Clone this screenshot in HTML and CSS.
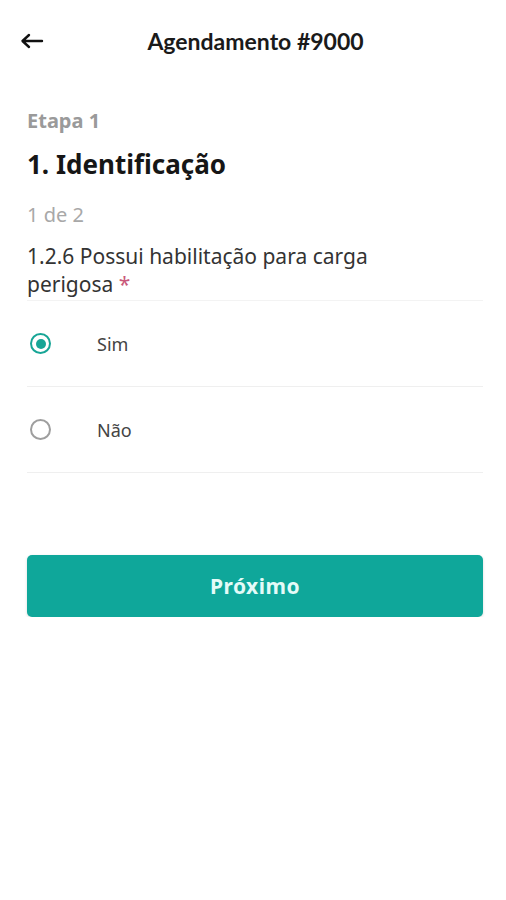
FILE: index.html
```html
<!DOCTYPE html>
<html lang="pt-BR">

<head>
    <meta charset="UTF-8">
    <meta name="viewport" content="width=device-width, initial-scale=1.0">
    <title>Agendamento #9000</title>

    <link rel="stylesheet" href="styles.css">
</head>

<body>
    <header class="topbar">
        <button class="back" aria-label="Voltar">
            <svg width="24" height="16" viewBox="0 0 24 16">
                <path d="M22 8H3M9 2L2.5 8L9 14" fill="none" stroke="#111" stroke-width="2.4" stroke-linecap="round" stroke-linejoin="round" />
            </svg>
        </button>
        <h1 class="title">Agendamento #9000</h1>
    </header>

    <main class="content">
        <p class="step">Etapa 1</p>
        <h2 class="section">1. Identificação</h2>
        <p class="counter">1 de 2</p>
        <p class="question">1.2.6 Possui habilitação para carga<br>perigosa <span class="required">*</span></p>

        <div class="options">
            <label class="option">
                <input type="radio" name="carga" checked>
                <span class="radio"></span>
                <span class="label">Sim</span>
            </label>
            <label class="option">
                <input type="radio" name="carga">
                <span class="radio"></span>
                <span class="label">Não</span>
            </label>
        </div>

        <button class="next">Próximo</button>
    </main>
</body>

</html>
```

FILE: styles.css
```css
* {
    box-sizing: border-box;
}

body {
    margin: 0;
    font-family: "Noto Sans", "Open Sans", sans-serif;
    color: #222;
    background: #fff;
}

.topbar {
    display: flex;
    align-items: center;
    height: 82px;
    padding: 0 20px;
}

.back {
    border: none;
    background: none;
    padding: 0;
    display: flex;
    cursor: pointer;
}

.title {
    flex: 1;
    margin: 0 19px 0 0;
    text-align: center;
    font-family: Lato, "Noto Sans", sans-serif;
    font-size: 23px;
    font-weight: 700;
    color: #1a1a1a;
}

.content {
    padding: 0 23px 0 27px;
}

.step {
    margin: 27px 0 0;
    font-size: 20px;
    line-height: 24px;
    font-weight: 700;
    color: #9a9a9a;
}

.section {
    margin: 15px 0 0;
    font-size: 26px;
    line-height: 32px;
    font-weight: 700;
    color: #161616;
}

.counter {
    margin: 23px 0 0;
    font-size: 20px;
    line-height: 24px;
    color: #a8a8a8;
}

.question {
    margin: 15px 0 0;
    font-size: 21px;
    line-height: 28px;
    color: #333;
}

.required {
    color: #c9587a;
}

.options {
    margin-top: 2px;
    border-top: 1px solid #f3f3f3;
}

.option {
    display: flex;
    align-items: center;
    height: 86px;
    border-bottom: 1px solid #efefef;
    cursor: pointer;
}

.option input {
    display: none;
}

.radio {
    width: 21px;
    height: 21px;
    margin-left: 3px;
    border: 2px solid #9e9e9e;
    border-radius: 50%;
    display: flex;
    align-items: center;
    justify-content: center;
}

.option input:checked+.radio {
    border-color: #17a596;
}

.option input:checked+.radio::after {
    content: "";
    width: 10px;
    height: 10px;
    border-radius: 50%;
    background: #17a596;
}

.label {
    margin-left: 46px;
    font-size: 18px;
    color: #444;
}

.next {
    display: block;
    width: 100%;
    height: 62px;
    margin-top: 82px;
    border: none;
    border-radius: 5px;
    background: #0fa79a;
    color: #e4fbf8;
    font-family: "Noto Sans", sans-serif;
    font-size: 21px;
    font-weight: 700;
    letter-spacing: 0.5px;
    box-shadow: 0 1px 3px rgba(0, 0, 0, 0.15);
    cursor: pointer;
}
```
